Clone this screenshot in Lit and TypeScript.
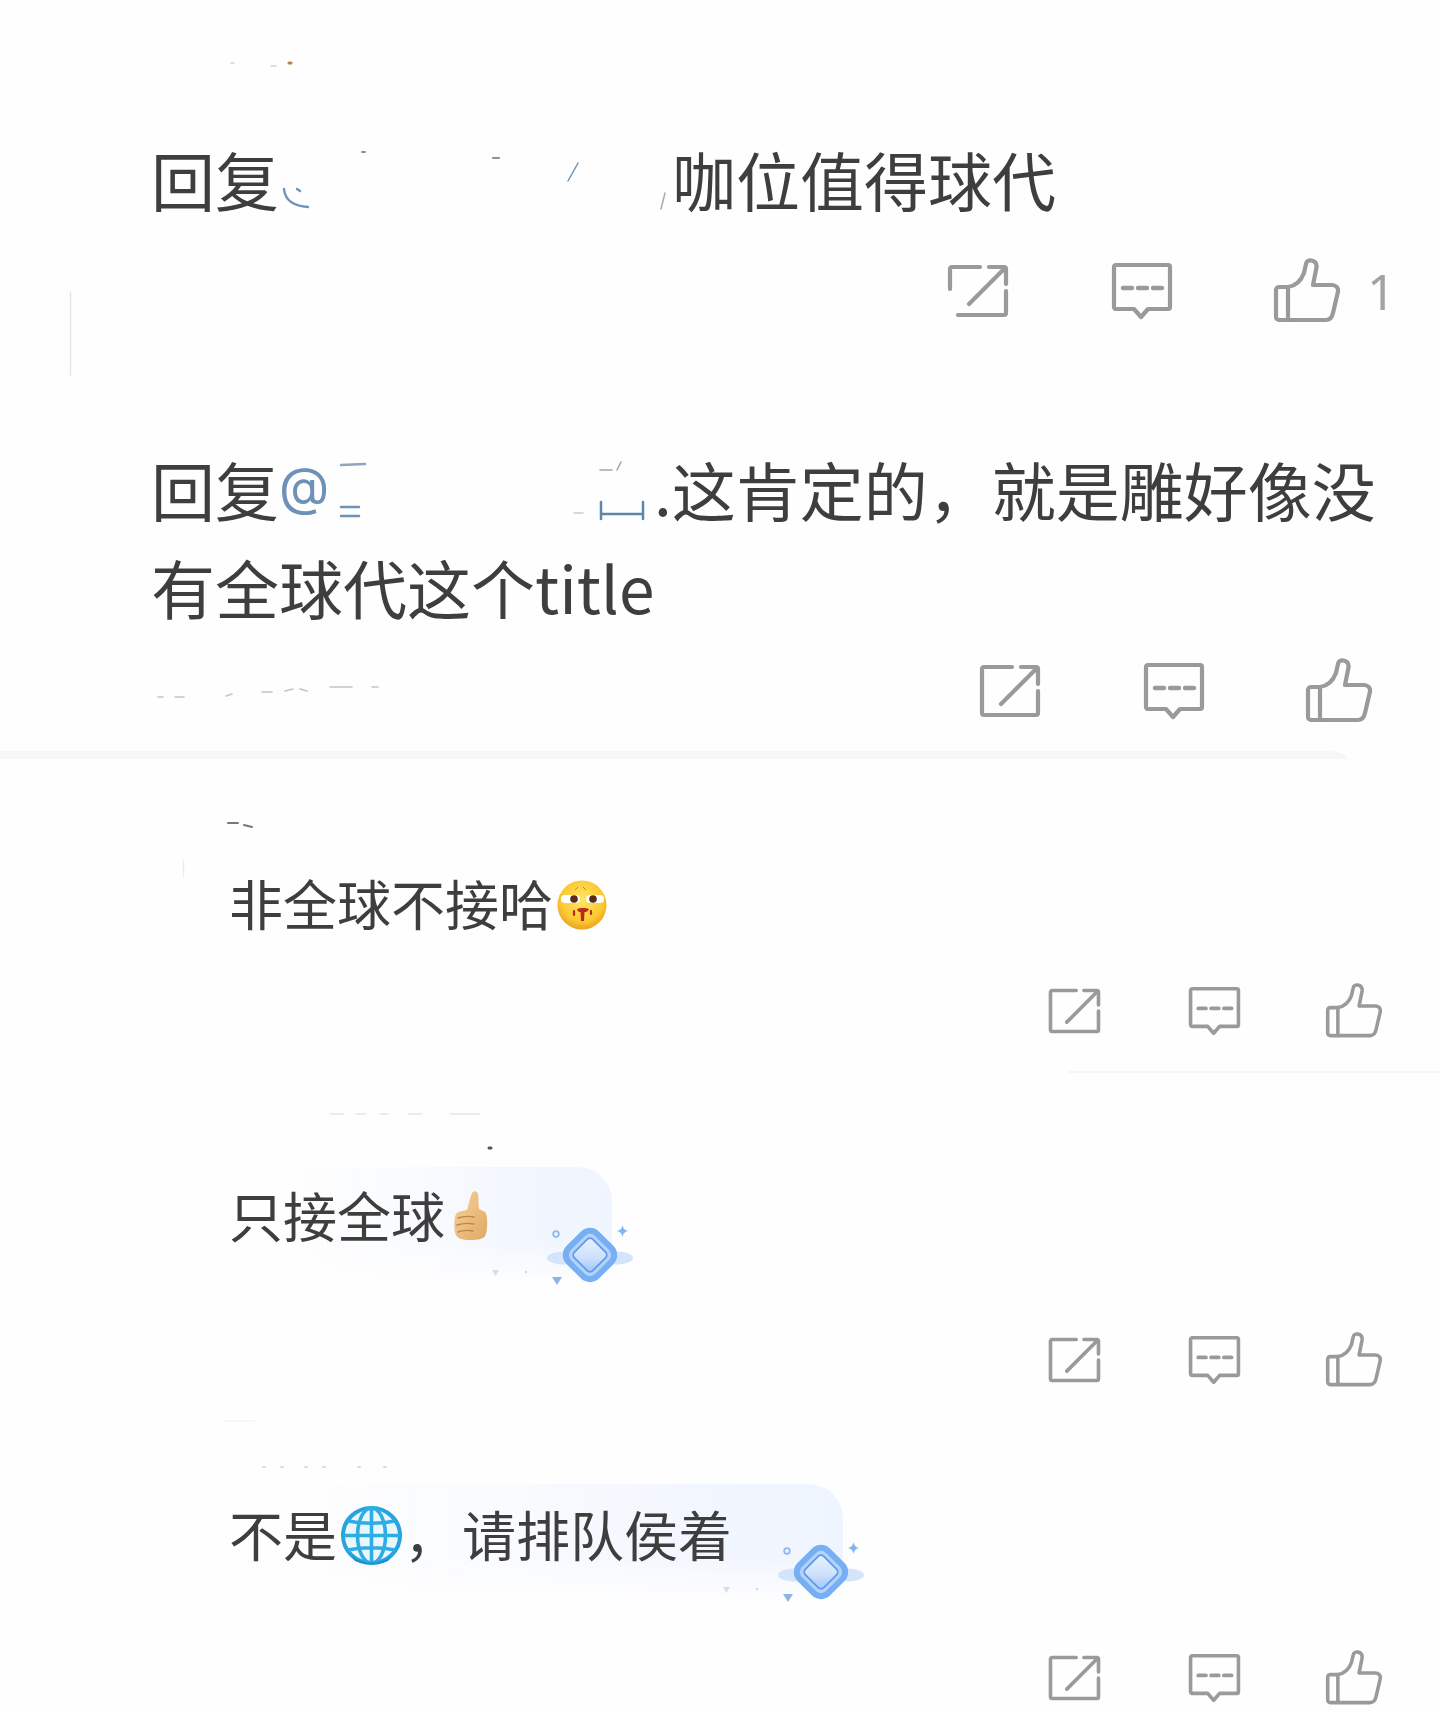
// app.ts
import { css, html, svg, LitElement } from 'lit';
import { customElement, property } from 'lit/decorators.js';

const shareFull = svg`
  <path d="M34 4H6a2 2 0 0 0-2 2v44a2 2 0 0 0 2 2h52a2 2 0 0 0 2-2V28"/>
  <path d="M43 4h15a2 2 0 0 1 2 2v15M23 41 59 5"/>`;

// first row of the reference has the lower left corner rubbed out
const shareCut = svg`
  <path d="M34 4H6a2 2 0 0 0-2 2v20M12 52h46a2 2 0 0 0 2-2V28"/>
  <path d="M43 4h15a2 2 0 0 1 2 2v15M23 41 59 5"/>`;

@customElement('action-bar')
export class ActionBar extends LitElement {
  static styles = css`
    :host {
      display: flex;
      justify-content: flex-end;
      align-items: center;
      height: 82px;
      padding-right: 67px;
    }
    :host([size='small']) {
      height: 70px;
      padding-right: 57px;
    }
    svg {
      display: block;
      fill: none;
      stroke: #9a9a9a;
      stroke-width: 4.2;
      stroke-linecap: round;
      stroke-linejoin: round;
    }
    .share { width: 64px; height: 56px; }
    .comment { width: 62px; height: 58px; margin-left: 101px; }
    .like { width: 68px; height: 66px; margin-left: 100px; }
    :host([size='small']) .share { width: 55px; height: 48px; }
    :host([size='small']) .comment { width: 53px; height: 50px; margin-left: 86px; }
    :host([size='small']) .like { width: 58px; height: 56px; margin-left: 84px; }
    .count {
      margin-left: 26px;
      width: 19px;
      margin-right: -12px;
      font-family: 'Noto Sans', sans-serif;
      font-size: 50px;
      font-weight: 400;
      line-height: 82px;
      color: #a3a3a3;
    }
  `;

  @property() size = 'big';
  @property() count = '';
  @property({ type: Boolean }) cut = false;

  render() {
    return html`
      <svg class="share" viewBox="0 0 64 56">${this.cut ? shareCut : shareFull}</svg>
      <svg class="comment" viewBox="0 0 62 58">
        <path d="M5 3h52a2 2 0 0 1 2 2v40a2 2 0 0 1-2 2H37l-7 8-7-8H5a2 2 0 0 1-2-2V5a2 2 0 0 1 2-2Z"/>
        <path d="M12 26h9M27 26h9M42 26h9" stroke-width="4.400"/>
      </svg>
      <svg class="like" viewBox="0 0 68 66">
        <path d="M15 29c7-1 13-6 16-14l2-9c.5-3 3-4 5.500-3.500 3.500.7 5.500 3 5 7L40 27h19c4 0 6.500 3 6 6.500L60 55c-1 4.500-3 7-7 7H15"/>
        <path d="M15 29H6a3 3 0 0 0-3 3v27a3 3 0 0 0 3 3h9Z"/>
      </svg>
      ${this.count ? html`<span class="count">${this.count}</span>` : ''}
    `;
  }
}

const faceEmoji = html`
  <svg class="emoji face" viewBox="0 0 50 50">
    <defs>
      <radialGradient id="faceFill" cx="50%" cy="40%" r="62%">
        <stop offset="0" stop-color="#ffe765"/>
        <stop offset=".7" stop-color="#fcc832"/>
        <stop offset="1" stop-color="#ec9c1a"/>
      </radialGradient>
    </defs>
    <circle cx="25" cy="25" r="24.500" fill="url(#faceFill)"/>
    <path d="M18 10l3-3M26 7l3 3" stroke="#b98a2a" stroke-width="1" fill="none"/>
    <rect x="4" y="15" width="19" height="8" rx="4" fill="#fff"/>
    <rect x="29" y="15" width="18" height="8" rx="4" fill="#fff"/>
    <circle cx="17" cy="19" r="3.800" fill="#5b2c14"/>
    <circle cx="36" cy="19" r="3.800" fill="#5b2c14"/>
    <path d="M20 29c3-1.500 9-1.500 12 0-1 2.500-3 3-4.500 3L27 41h-3l-.5-9c-1.500 0-3-.5-3.500-3Z" fill="#b8291c"/>
    <path d="M17 31v4M34 31v3" stroke="#b8291c" stroke-width="2.200" stroke-linecap="round"/>
  </svg>`;

const thumbEmoji = html`
  <svg class="emoji thumb" viewBox="0 0 34 50">
    <defs>
      <linearGradient id="thumbFill" x1="0" x2="1" y1="0" y2="1">
        <stop offset="0" stop-color="#f6d49c"/>
        <stop offset="1" stop-color="#e0a862"/>
      </linearGradient>
    </defs>
    <path d="M13 20c2-6 3-13 5-17 1-2 5-3 6 1 1 5 0 10 1 15l6 3c3 3 3 20 0 24-2 3-7 4-14 4C8 50 2 49 1 42c-1-5-1-14 1-18 2-3 7-3 11-4Z" fill="url(#thumbFill)"/>
    <path d="M4 28c6-2 11-2 16-1M3 35c6-2 11-2 17-1M4 42c5-2 10-2 15-1" stroke="#bd8749" stroke-width="1.400" fill="none" stroke-linecap="round"/>
  </svg>`;

const globeEmoji = html`
  <svg class="emoji globe" viewBox="0 0 61 59">
    <ellipse cx="30.500" cy="29.500" rx="28.500" ry="27.500" fill="#e9f7fd" stroke="#27a3dd" stroke-width="4"/>
    <g fill="none" stroke="#2cade4" stroke-width="3.600">
      <ellipse cx="30.500" cy="29.500" rx="14" ry="27.500"/>
      <path d="M30.500 2v55M2 29.500h57M7 15c14 3 33 3 47 0M7 44c14-3 33-3 47 0"/>
    </g>
    <path d="M10 50c12 9 29 9 41 0l-4 5c-9 4-24 4-33 0Z" fill="#1b8cc8"/>
  </svg>`;

const medal = html`
  <svg class="medal" viewBox="0 0 145 62">
    <defs>
      <linearGradient id="gem" x1="0" x2="1" y1="0" y2="1">
        <stop offset="0" stop-color="#eaf3fe"/>
        <stop offset=".55" stop-color="#cfe2fb"/>
        <stop offset="1" stop-color="#9cc4f6"/>
      </linearGradient>
    </defs>
    <ellipse cx="73" cy="33" rx="16" ry="6.500" fill="#d3e4fb"/>
    <ellipse cx="127" cy="33" rx="16" ry="6.500" fill="#d3e4fb"/>
    <rect x="80" y="10" width="40" height="40" rx="10" transform="rotate(45 100 30)" fill="#b5d3f8" stroke="#76aff3" stroke-width="6"/>
    <rect x="87" y="17" width="26" height="26" rx="4" transform="rotate(45 100 30)" fill="url(#gem)" stroke="#5d9bec" stroke-width="1.800"/>
    <circle cx="66" cy="9" r="2.800" fill="none" stroke="#8fb9ee" stroke-width="1.800"/>
    <path d="M132.500 0c.7 3.500 2 5 5.500 6-3.500 1-4.800 2.500-5.500 6-.7-3.500-2-5-5.500-6 3.500-1 4.800-2.500 5.500-6Z" fill="#83b4f0"/>
    <path d="M62 52h10l-5 8Z" fill="#8fb4e6"/>
    <path d="M2 45h7l-3.500 6Z" fill="#d2deec"/>
    <circle cx="36" cy="47" r="1.300" fill="#cfdbea"/>
  </svg>`;

// leftovers of the blanked out names, in page coordinates
const residue = svg`
  <g fill="none" stroke-linecap="round">
    <path d="M70.500 292v83" stroke="#e6e6e6" stroke-width="1.500"/>
    <path d="M231 63h3M271 66h5" stroke="#d6d6d6" stroke-width="1.500"/>
    <path d="M289 63h2" stroke="#b9813a" stroke-width="3"/>
    <path d="M284 189c1 11 9 17 24 18M297 189l3 2" stroke="#6f93b6" stroke-width="2.400"/>
    <path d="M362 152h3M493 158h6" stroke="#8a8f94" stroke-width="2"/>
    <path d="M578 163l-10 18" stroke="#6f93b6" stroke-width="1.500"/>
    <path d="M665 193l-4 16" stroke="#aaa" stroke-width="1.500"/>
    <path d="M341 465l24-1" stroke="#8ea7c0" stroke-width="2.500"/>
    <path d="M341 507h18M341 516h18" stroke="#6f93b6" stroke-width="2.500"/>
    <path d="M621 462l-4 8M600 470h12" stroke="#9aa7b3" stroke-width="1.500"/>
    <path d="M601 502v17M643 502v17M601 514h42" stroke="#5f86ab" stroke-width="2.500"/>
    <path d="M574 513h9" stroke="#ccc" stroke-width="1.500"/>
    <path d="M158 697h5M175 697h9M226 696l6-2M262 692h10M285 691l8-2M300 689l7 2M330 687h22M372 687h6" stroke="#c4c4c4" stroke-width="1.500"/>
    <path d="M228 823h10M244 825l8 2" stroke="#777" stroke-width="2"/>
    <path d="M183.500 860v17" stroke="#ededed" stroke-width="1.500"/>
    <path d="M330 1114h14M356 1114h10M380 1114h8M408 1114h14M450 1114h30" stroke="#e6e6e6" stroke-width="1.500"/>
    <path d="M489 1148h2" stroke="#555" stroke-width="3"/>
    <path d="M224 1421h30" stroke="#f4f4f4" stroke-width="1.500"/>
    <path d="M263 1467h2M281 1467h2M305 1467h2M323 1467h2M358 1467h2M384 1467h2" stroke="#e2dccf" stroke-width="2"/>
  </g>`;

@customElement('app-root')
export class AppRoot extends LitElement {
  static styles = css`
    :host {
      display: block;
      position: relative;
      width: 1440px;
      height: 1712px;
      overflow: hidden;
      background: #fefefe;
      font-family: 'Noto Sans CJK SC', 'Noto Sans', sans-serif;
      color: #3e3e3e;
      filter: blur(0.5px);
    }
    .residue {
      position: absolute;
      left: 0;
      top: 0;
      width: 1440px;
      height: 1712px;
      pointer-events: none;
    }
    .reply {
      padding: 0 40px 0 151px;
      font-size: 64px;
      line-height: 98px;
    }
    .first { margin-top: 129px; }
    .second { margin-top: 107px; }
    .blank { display: inline-block; }
    .blank.one { width: 393px; }
    .blank.two { width: 325px; }
    .at {
      display: inline-block;
      width: 50px;
      font-family: Inter, sans-serif;
      font-size: 52px;
      line-height: 0;
      vertical-align: 11px;
      color: #6d92b6;
    }
    .bar-one { margin-top: 23px; padding-right: 66px; }
    .bar-two { margin-top: 15px; }
    .divider {
      margin-top: 19px;
      width: 1347px;
      height: 8px;
      background: #f7f7f7;
      border-top-right-radius: 18px 8px;
    }
    .sub {
      position: relative;
      display: flex;
      align-items: center;
      height: 74px;
      padding-left: 229px;
      font-size: 54px;
      line-height: 74px;
    }
    .sub span { position: relative; }
    .sub-a { margin-top: 107px; }
    .sub-b { margin-top: 105px; }
    .sub-c { margin-top: 102px; }
    .bar-sub-a { margin-top: 36px; }
    .bar-sub-b { margin-top: 73px; }
    .bar-sub-c { margin-top: 72px; }
    .thin {
      margin: 25px 0 0 1068px;
      height: 2px;
      background: #f6f6f6;
    }
    .emoji { display: block; position: relative; flex: none; }
    .face { width: 50px; height: 50px; margin: 4px 0 0 4px; }
    .thumb { width: 34px; height: 50px; margin-left: 9px; }
    .globe { width: 61px; height: 59px; margin: 2px 0 0 4px; }
    .comma { margin: 0 4px 0 2px; }
    .bubble {
      position: absolute;
      top: -11px;
      height: 118px;
    }
    .bubble::before {
      content: '';
      position: absolute;
      inset: 0;
      border-radius: 0 34px 34px 0;
      background: linear-gradient(90deg, rgba(240, 246, 254, 0), #f8fafe 45%, #f2f6fe 75%, #eff5fe);
      -webkit-mask-image: linear-gradient(180deg, #000 65%, transparent);
      mask-image: linear-gradient(180deg, #000 65%, transparent);
    }
    .bubble-b { left: 287px; width: 325px; }
    .bubble-c { top: -13px; left: 290px; width: 553px; height: 115px; }
    .medal {
      position: absolute;
      right: -23px;
      bottom: -2px;
      width: 145px;
      height: 62px;
    }
    .bubble-c .medal { bottom: -5px; }
  `;

  render() {
    return html`
      <div class="reply first">回复<span class="blank one"></span>咖位值得球代</div>
      <action-bar class="bar-one" count="1" cut></action-bar>
      <div class="reply second">
        <div>回复<span class="at">@</span><span class="blank two"></span>.这肯定的，就是雕好像没</div>
        <div>有全球代这个title</div>
      </div>
      <action-bar class="bar-two"></action-bar>
      <div class="divider"></div>

      <div class="sub sub-a"><span>非全球不接哈</span>${faceEmoji}</div>
      <action-bar class="bar-sub-a" size="small"></action-bar>
      <div class="thin"></div>

      <div class="sub sub-b">
        <div class="bubble bubble-b">${medal}</div>
        <span>只接全球</span>${thumbEmoji}
      </div>
      <action-bar class="bar-sub-b" size="small"></action-bar>

      <div class="sub sub-c">
        <div class="bubble bubble-c">${medal}</div>
        <span>不是</span>${globeEmoji}<span class="comma">，</span><span>请排队侯着</span>
      </div>
      <action-bar class="bar-sub-c" size="small"></action-bar>

      <svg class="residue" viewBox="0 0 1440 1712">${residue}</svg>
    `;
  }
}
